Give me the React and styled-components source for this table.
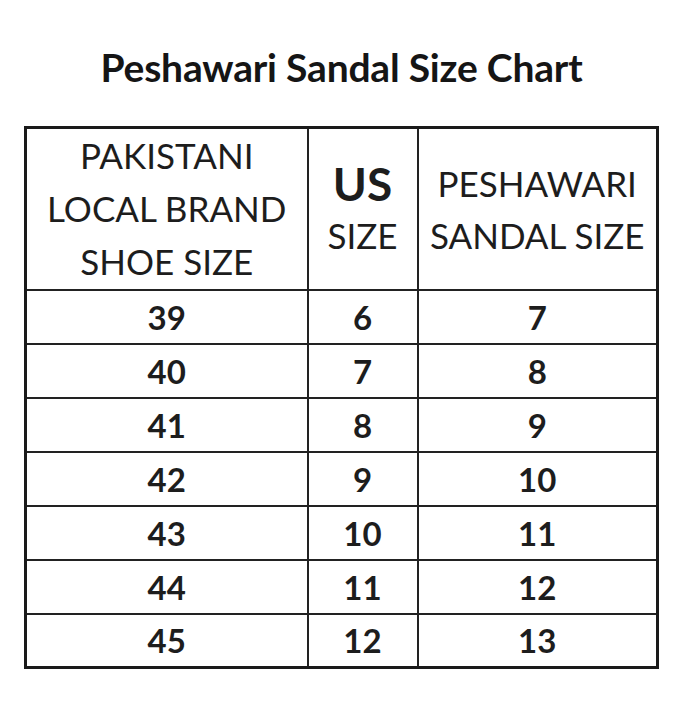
import React from "react";
import styled, { createGlobalStyle } from "styled-components";

const Global = createGlobalStyle`
  html, body { margin: 0; padding: 0; background: #ffffff; }
  body { font-family: Lato, "Open Sans", sans-serif; color: #1d1d1d; }
`;

const Page = styled.div`
  width: 683px;
  height: 720px;
  padding-top: 42px;
  box-sizing: border-box;
  display: flex;
  flex-direction: column;
  align-items: center;
`;

const Title = styled.h1`
  margin: 0;
  font-family: Lato, sans-serif;
  font-weight: 700;
  font-size: 39px;
  line-height: 50px;
  color: #151515;
  letter-spacing: -0.2px;
`;

const Table = styled.table`
  margin-top: 34px;
  margin-left: 24px;
  align-self: flex-start;
  border-collapse: collapse;
  border: 3px solid #1a1a1a;
  table-layout: fixed;
  width: 632px;
`;

const Cell = styled.td`
  border: 2px solid #222;
  padding: 0;
  text-align: center;
  vertical-align: middle;
  font-family: Lato, sans-serif;
  font-weight: ${(p) => (p.$bold ? 700 : 400)};
  font-size: ${(p) => p.$size || 32}px;
  line-height: ${(p) => p.$lh || 54}px;
  color: #1d1d1d;
`;

const HeadRow = styled.tr`
  height: 162px;
`;

const BodyRow = styled.tr`
  height: 54px;
`;

const Line = styled.div`
  font-weight: ${(p) => (p.$bold ? 700 : 400)};
  font-size: ${(p) => p.$size}px;
  line-height: ${(p) => p.$lh}px;
  letter-spacing: ${(p) => p.$ls || 0}px;
  white-space: nowrap;
`;

const rows = [
  [39, 6, 7],
  [40, 7, 8],
  [41, 8, 9],
  [42, 9, 10],
  [43, 10, 11],
  [44, 11, 12],
  [45, 12, 13],
];

export default function App() {
  return (
    <>
      <Global />
      <Page>
        <Title>Peshawari Sandal Size Chart</Title>
        <Table>
          <colgroup>
            <col style={{ width: 282 }} />
            <col style={{ width: 110 }} />
            <col style={{ width: 240 }} />
          </colgroup>
          <tbody>
            <HeadRow>
              <Cell>
                <Line $size={35} $lh={53}>PAKISTANI</Line>
                <Line $size={35} $lh={53}>LOCAL BRAND</Line>
                <Line $size={35} $lh={53}>SHOE SIZE</Line>
              </Cell>
              <Cell>
                <Line $bold $size={46} $lh={52}>US</Line>
                <Line $size={35} $lh={50}>SIZE</Line>
              </Cell>
              <Cell>
                <Line $size={35} $lh={52}>PESHAWARI</Line>
                <Line $size={35} $lh={52}>SANDAL SIZE</Line>
              </Cell>
            </HeadRow>
            {rows.map((r) => (
              <BodyRow key={r[0]}>
                {r.map((v, i) => (
                  <Cell key={i} $bold $size={33} $lh={50}>
                    {v}
                  </Cell>
                ))}
              </BodyRow>
            ))}
          </tbody>
        </Table>
      </Page>
    </>
  );
}
